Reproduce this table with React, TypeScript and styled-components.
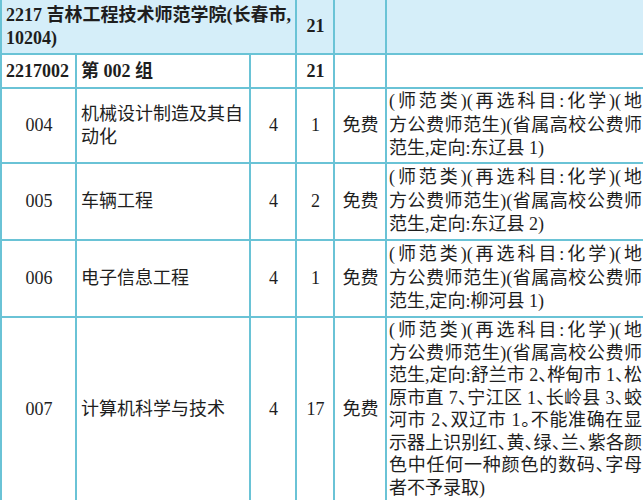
import React from "react";
import styled, { createGlobalStyle } from "styled-components";

const GlobalStyle = createGlobalStyle`
  html, body {
    margin: 0;
    padding: 0;
    background: #ffffff;
  }
`;

const LINE = "#6ac3d6";
const HEAD_BG = "#d5eef9";

const Table = styled.table`
  width: 643px;
  table-layout: fixed;
  border-collapse: collapse;
  font-family: "Liberation Serif", "Noto Sans CJK SC", serif;
  font-size: 18px;
  color: #1e1e1e;
`;

const Row = styled.tr<{ $h: number; $head?: boolean }>`
  height: ${(p) => p.$h}px;
  background: ${(p) => (p.$head ? HEAD_BG : "#ffffff")};
`;

const Cell = styled.td<{ $align?: "left" | "center"; $bold?: boolean; $top?: boolean }>`
  border: 2px solid ${LINE};
  ${(p) => (p.$top ? "border-top-style: hidden;" : "")}
  padding: 2px 3px 2px 4px;
  text-align: ${(p) => p.$align ?? "center"};
  vertical-align: middle;
  font-weight: ${(p) => (p.$bold ? 700 : 400)};
  line-height: 23px;
  overflow: hidden;
`;

const HeadLine = styled.span`
  display: block;
  white-space: nowrap;
`;

const Remark = styled.td<{ $top?: boolean; $lh?: number }>`
  border: 2px solid ${LINE};
  ${(p) => (p.$top ? "border-top-style: hidden;" : "")}
  padding: 1px 1px 1px 2px;
  vertical-align: middle;
  line-height: ${(p) => p.$lh ?? 22.5}px;
  font-feature-settings: "halt";
`;

const RemarkLine = styled.span<{ $last?: boolean }>`
  display: block;
  white-space: nowrap;
  text-align: left;
  text-align-last: ${(p) => (p.$last ? "left" : "justify")};
`;

const base = ["(师范类)(再选科目:化学)(地", "方公费师范生)(省属高校公费师"];

const majors = [
  { code: "004", name: "机械设计制造及其自动化", years: "4", plan: "1", h: 75, lh: 23.5, note: [...base, "范生,定向:东辽县 1)"] },
  { code: "005", name: "车辆工程", years: "4", plan: "2", h: 77, lh: 23.5, note: [...base, "范生,定向:东辽县 2)"] },
  { code: "006", name: "电子信息工程", years: "4", plan: "1", h: 77, lh: 23.5, note: [...base, "范生,定向:柳河县 1)"] },
  {
    code: "007",
    name: "计算机科学与技术",
    years: "4",
    plan: "17",
    h: 181,
    lh: 22.5,
    note: [
      ...base,
      "范生,定向:舒兰市 2、桦甸市 1、松",
      "原市直 7、宁江区 1、长岭县 3、蛟",
      "河市 2、双辽市 1。不能准确在显",
      "示器上识别红、黄、绿、兰、紫各颜",
      "色中任何一种颜色的数码、字母",
      "者不予录取)",
    ],
  },
];

export default function App() {
  return (
    <>
      <GlobalStyle />
      <Table>
        <colgroup>
          <col style={{ width: 75 }} />
          <col style={{ width: 174 }} />
          <col style={{ width: 46 }} />
          <col style={{ width: 38 }} />
          <col style={{ width: 52 }} />
          <col style={{ width: 258 }} />
        </colgroup>
        <tbody>
          <Row $h={54} $head>
            <Cell colSpan={3} $align="left" $bold $top>
              <HeadLine>2217 吉林工程技术师范学院(长春市,</HeadLine>
              <HeadLine>10204)</HeadLine>
            </Cell>
            <Cell $bold $top>21</Cell>
            <Cell $top />
            <Remark $top />
          </Row>
          <Row $h={34}>
            <Cell $align="left" $bold>2217002</Cell>
            <Cell $align="left" $bold>第 002 组</Cell>
            <Cell />
            <Cell $bold>21</Cell>
            <Cell />
            <Remark />
          </Row>
          {majors.map((m) => (
            <Row key={m.code} $h={m.h}>
              <Cell>{m.code}</Cell>
              <Cell $align="left">{m.name}</Cell>
              <Cell>{m.years}</Cell>
              <Cell>{m.plan}</Cell>
              <Cell>免费</Cell>
              <Remark $lh={m.lh}>
                {m.note.map((line, i) => (
                  <RemarkLine key={i} $last={i === m.note.length - 1}>
                    {line}
                  </RemarkLine>
                ))}
              </Remark>
            </Row>
          ))}
        </tbody>
      </Table>
    </>
  );
}
